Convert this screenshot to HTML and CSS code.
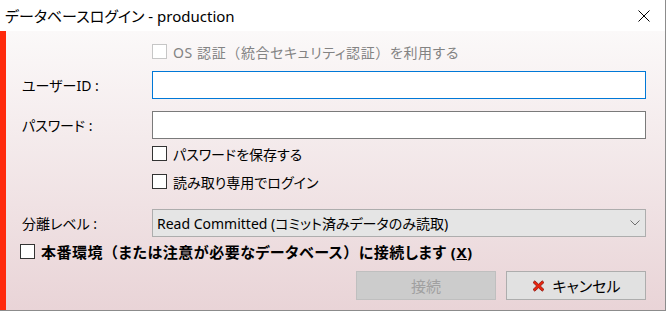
FILE: index.html
```html
<html>

<head>
    <link rel="stylesheet" href="styles.css">
</head>

<body>

    <div class="window">
        <div class="titlebar">
            <p class="title"> データベースログイン - production </p>
            <svg class="close" width="12" height="12" viewBox="0 0 12 12">
                <path d="M0.5 0.5 L11.5 11.5 M11.5 0.5 L0.5 11.5" stroke="#000" stroke-width="1" fill="none" />
            </svg>
        </div>

        <div class="main">
            <div class="accent"></div>

            <div class="content">
                <div class="row row-os">
                    <span class="label"></span>
                    <label class="check disabled">
                        <span class="box"></span>
                        <span>OS 認証<span class="wide">（</span>統合セキュリティ認証<span class="wide">）</span>を利用する</span>
                    </label>
                </div>

                <div class="row row-user">
                    <span class="label"> ユーザーID : </span>
                    <input type="text" class="field focused">
                </div>

                <div class="row row-pass">
                    <span class="label"> パスワード : </span>
                    <input type="password" class="field">
                </div>

                <div class="row row-save">
                    <span class="label"></span>
                    <label class="check">
                        <span class="box"></span>
                        パスワードを保存する
                    </label>
                </div>

                <div class="row row-readonly">
                    <span class="label"></span>
                    <label class="check">
                        <span class="box"></span>
                        読み取り専用でログイン
                    </label>
                </div>

                <div class="row row-level">
                    <span class="label"> 分離レベル : </span>
                    <div class="combo">
                        <span> Read Committed (コミット済みデータのみ読取) </span>
                        <svg width="10" height="6" viewBox="0 0 10 6">
                            <path d="M0.5 0.5 L5 5 L9.5 0.5" stroke="#6f6f6f" stroke-width="1" fill="none" />
                        </svg>
                    </div>
                </div>

                <div class="row row-prod">
                    <label class="check strong">
                        <span class="box"></span>
                        <span>本番環境<span class="wide">（</span>または注意が必要なデータベース<span class="wide">）</span>に接続します (<u>X</u>)</span>
                    </label>
                </div>

                <div class="row buttons">
                    <button class="btn disabled"> 接続 </button>
                    <button class="btn">
                        <svg width="13" height="12" viewBox="0 0 13 12">
                            <path d="M1 2.5 L2.8 0.8 L6.5 4.2 L10.2 0.8 L12 2.5 L8.4 6 L12 9.5 L10.2 11.2 L6.5 7.8 L2.8 11.2 L1 9.5 L4.6 6 Z"
                                fill="#e8230e" stroke="#8a1a10" stroke-width="0.8" stroke-linejoin="round" />
                        </svg>
                        キャンセル
                    </button>
                </div>
            </div>
        </div>
    </div>

</body>

</html>
```

FILE: styles.css
```css
body {
    margin: 0;
    font-family: "Noto Sans", "Noto Sans CJK JP", sans-serif;
    font-size: 14px;
    color: #000;
    text-autospace: no-autospace;
}

.window {
    width: 666px;
    height: 311px;
    box-sizing: border-box;
    border: 1px solid #8c8c8c;
    border-top: none;
    border-left: none;
    display: flex;
    flex-direction: column;
}

/* Title bar */
.titlebar {
    height: 31px;
    flex-shrink: 0;
    background-color: #fff;
    display: flex;
    align-items: center;
    justify-content: space-between;
    padding: 0 15px 0 5px;
}

.title {
    margin: 0;
    font-size: 15px;
    font-feature-settings: "palt";
}

/* Dialog body */
.main {
    flex: 1;
    display: flex;
}

.accent {
    width: 6px;
    background-color: #ff2a0c;
}

.content {
    flex: 1;
    background: linear-gradient(#fbf9f9, #e9d4d7);
    padding: 12px 19px 0 0;
    font-feature-settings: "palt";
}

.wide {
    font-feature-settings: normal;
}

.row {
    display: flex;
    align-items: center;
}

.label {
    width: 146px;
    padding-left: 16px;
    box-sizing: border-box;
    flex-shrink: 0;
}

.row-os { height: 17px; }
.row-user { height: 28px; margin-top: 11px; }
.row-pass { height: 28px; margin-top: 12px; }
.row-save { height: 17px; margin-top: 6px; }
.row-readonly { height: 17px; margin-top: 11px; }
.row-level { height: 28px; margin-top: 19px; }
.row-prod { height: 17px; margin-top: 6px; padding-left: 14px; }

.field {
    flex: 1;
    height: 28px;
    box-sizing: border-box;
    border: 1px solid #7a7a7a;
    background-color: #fff;
    margin: 0;
    outline: none;
}

.field.focused {
    border-color: #0078d7;
}

/* Checkboxes */
.check {
    display: flex;
    align-items: center;
    gap: 6px;
}

.box {
    width: 15px;
    height: 15px;
    flex-shrink: 0;
    box-sizing: border-box;
    border: 1px solid #333;
    background-color: #fff;
}

.check.disabled {
    color: #838383;
    letter-spacing: 0.6px;
}

.check.disabled .box {
    border-color: #c6c6c6;
}

.check.strong {
    font-weight: bold;
    font-size: 15px;
    letter-spacing: 0.5px;
}

/* Combo box */
.combo {
    flex: 1;
    height: 28px;
    box-sizing: border-box;
    border: 1px solid #adadad;
    background-color: #e5e5e5;
    display: flex;
    align-items: center;
    justify-content: space-between;
    padding: 0 5px 0 4px;
}

/* Buttons */
.buttons {
    margin-top: 11px;
    justify-content: flex-end;
    gap: 10px;
}

.btn {
    width: 140px;
    height: 29px;
    box-sizing: border-box;
    border: 1px solid #adadad;
    background-color: #e1e1e1;
    font-family: inherit;
    font-size: 15px;
    font-feature-settings: "palt";
    color: #000;
    display: flex;
    align-items: center;
    justify-content: center;
    gap: 8px;
    padding: 0;
}

.btn.disabled {
    background-color: #cccccc;
    border-color: #bfbfbf;
    color: #a0a0a0;
}
```
